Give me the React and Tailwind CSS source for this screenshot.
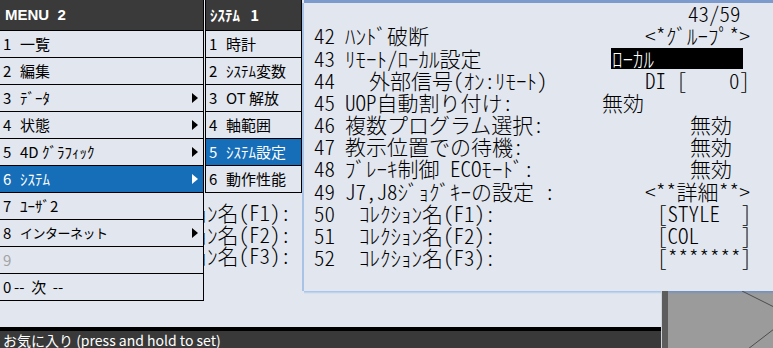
import React from 'react';

const JP = "font-['Noto_Sans_CJK_JP',sans-serif]";

function Arrow({ white }) {
  return (
    <svg width="6" height="10" viewBox="0 0 6 10" className="ml-auto mr-[5px] shrink-0">
      <polygon points="0,0 6,5 0,10" fill={white ? '#ffffff' : '#000000'} />
    </svg>
  );
}

function MenuItem({ n, label, sub, active, dim, small, numClass = 'w-[17px]' }) {
  return (
    <div
      className={`flex h-[27px] items-center border-t border-black pl-[3px] text-[15px] ${
        active ? 'bg-[#166eb9] text-white' : dim ? 'text-[#a3a3a3]' : 'text-black'
      }`}
    >
      <span className={`shrink-0 ${numClass}`}>{n}</span>
      <span className={`whitespace-pre ${small ? 'text-[13px] tracking-[-0.5px]' : ''}`}>{label}</span>
      {sub && <Arrow white={active} />}
    </div>
  );
}

function Row({ n, label, labelClass, children }) {
  return (
    <div className="flex h-[22.2px] items-center whitespace-pre">
      <span className="w-[31px] shrink-0">{n}</span>
      <span className={`shrink-0 ${labelClass}`}>{label}</span>
      {children}
    </div>
  );
}

export default function App() {
  return (
    <div className={`relative h-[348px] w-[773px] overflow-hidden bg-[#e2e6ee] ${JP}`}>
      {/* underlying screen */}
      <div className="flex h-full flex-col">
        <div className="flex h-[291px] flex-col">
          <div className="ml-[304px] h-[3px] bg-[#7c9acb]" />
          <div className="ml-[203px] mt-[199px] flex w-[98px] flex-col overflow-hidden text-[21px] font-light [font-feature-settings:'hwid']">
            <div className="flex h-[21.5px] items-center justify-end whitespace-pre pr-[10px]">ｼｮﾝ名(F1):</div>
            <div className="flex h-[21.5px] items-center justify-end whitespace-pre pr-[10px]">ｼｮﾝ名(F2):</div>
            <div className="flex h-[21.5px] items-center justify-end whitespace-pre pr-[10px]">ｼｮﾝ名(F3):</div>
          </div>
        </div>
        <div className="flex flex-1">
          <div className="flex w-[661px] flex-col">
            <div className="ml-[304px] h-[3px] bg-gradient-to-b from-[#9fc0ea] to-[#e2e6ee]" />
            <div className="flex-1" />
            <div className="h-[4px] bg-black" />
            <div className="flex h-[17px] items-center bg-[#393939] pl-[3px] text-[14px] leading-none text-white">
              お気に入り (press and hold to set)
            </div>
          </div>
          <div className="w-px bg-[#cfd3da]" />
          <div className="w-[6px] bg-[#5d5d5d]" />
          <div className="relative flex-1 bg-[#9b9b9b]">
            <div className="h-[3px] bg-gradient-to-b from-[#6f8fbf] to-[#9b9b9b]" />
            <svg className="absolute inset-0" width="105" height="57" viewBox="0 0 105 57">
              <line x1="74" y1="0" x2="106" y2="16" stroke="#4d4d4d" strokeWidth="1" />
              <line x1="106" y1="38" x2="80" y2="58" stroke="#4d4d4d" strokeWidth="1" />
            </svg>
          </div>
        </div>
      </div>

      {/* MENU 2 */}
      <div className="absolute left-0 top-0 w-[204px] border-r border-b border-black bg-[#e2e6ee]">
        <div className="flex h-[30px] items-center whitespace-pre bg-[#3a3a3a] pl-[5px] font-['Liberation_Sans',sans-serif] text-[15px] font-bold text-white">
          MENU  2
        </div>
        <MenuItem n="1" label="一覧" />
        <MenuItem n="2" label="編集" />
        <MenuItem n="3" label="ﾃﾞｰﾀ" sub />
        <MenuItem n="4" label="状態" sub />
        <MenuItem n="5" label="4D ｸﾞﾗﾌｨｯｸ" sub />
        <MenuItem n="6" label="ｼｽﾃﾑ" sub active />
        <MenuItem n="7" label="ﾕｰｻﾞ2" />
        <MenuItem n="8" label="インターネット" sub small />
        <MenuItem n="9" label="" dim />
        <MenuItem n="0" label="--  次  --" numClass="w-[11px]" />
      </div>

      {/* システム 1 */}
      <div className="absolute left-[205px] top-0 w-[97px] border-x border-b border-black bg-[#e2e6ee]">
        <div className="flex h-[30px] items-center whitespace-pre bg-[#3a3a3a] pl-[4px] text-[15px] font-bold text-white">
          ｼｽﾃﾑ   1
        </div>
        <MenuItem n="1" label="時計" />
        <MenuItem n="2" label="ｼｽﾃﾑ変数" />
        <MenuItem n="3" label="OT 解放" />
        <MenuItem n="4" label="軸範囲" />
        <MenuItem n="5" label="ｼｽﾃﾑ設定" active />
        <MenuItem n="6" label="動作性能" />
      </div>

      {/* settings panel */}
      <div className="absolute left-[302px] top-[3px] h-[288px] w-[471px] border-l-2 border-[#a9c3e6] bg-[#e2e6ee] pl-[10px] text-[21px] font-light text-black [font-feature-settings:'hwid']">
        <div className="flex h-[22px] items-center whitespace-pre pl-[374px]">43/59</div>
        <Row n="42" label="ﾊﾝﾄﾞ破断" labelClass="w-[300px]">
          <span>&lt;*ｸﾞﾙｰﾌﾟ*&gt;</span>
        </Row>
        <Row n="43" label="ﾘﾓｰﾄ/ﾛｰｶﾙ設定" labelClass="w-[266px]">
          <span className="flex h-[21px] w-[132px] items-center bg-black pl-[1px] text-white">ﾛｰｶﾙ</span>
        </Row>
        <Row n="44" label="外部信号(ｵﾝ:ﾘﾓｰﾄ)" labelClass="w-[300px] pl-[24px]">
          <span>DI [    0]</span>
        </Row>
        <Row n="45" label="UOP自動割り付け:" labelClass="w-[257px]">
          <span>無効</span>
        </Row>
        <Row n="46" label="複数プログラム選択:" labelClass="w-[345px]">
          <span>無効</span>
        </Row>
        <Row n="47" label="教示位置での待機:" labelClass="w-[345px]">
          <span>無効</span>
        </Row>
        <Row n="48" label="ﾌﾞﾚｰｷ制御 ECOﾓｰﾄﾞ:" labelClass="w-[345px]">
          <span>無効</span>
        </Row>
        <Row n="49" label="J7,J8ｼﾞｮｸﾞｷｰの設定 :" labelClass="w-[300px]">
          <span>&lt;**詳細**&gt;</span>
        </Row>
        <Row n="50" label="ｺﾚｸｼｮﾝ名(F1):" labelClass="w-[312px] pl-[14px]">
          <span>[STYLE  ]</span>
        </Row>
        <Row n="51" label="ｺﾚｸｼｮﾝ名(F2):" labelClass="w-[312px] pl-[14px]">
          <span>[COL    ]</span>
        </Row>
        <Row n="52" label="ｺﾚｸｼｮﾝ名(F3):" labelClass="w-[312px] pl-[14px]">
          <span>[*******]</span>
        </Row>
      </div>
    </div>
  );
}
